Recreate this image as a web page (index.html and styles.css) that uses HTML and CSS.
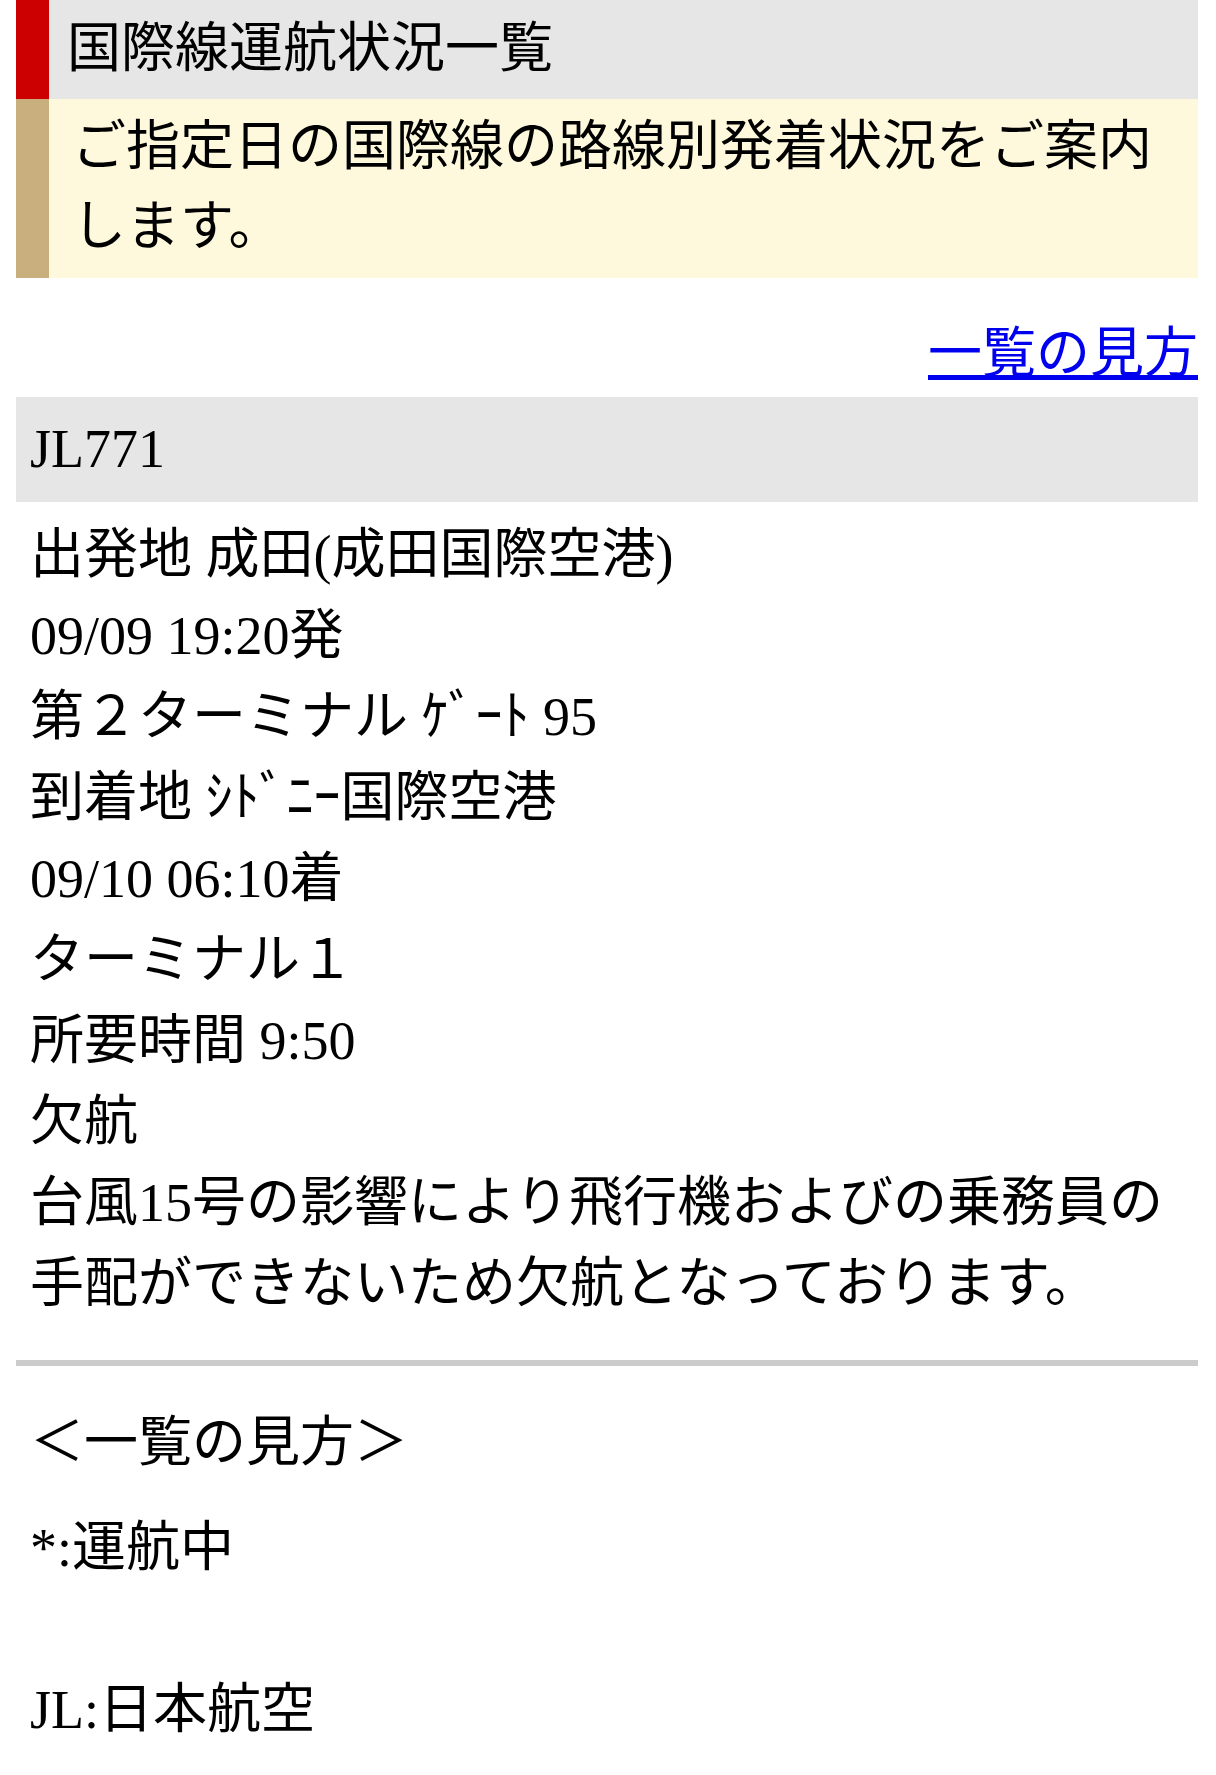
FILE: index.html
```html
<!DOCTYPE html>
<html lang="ja">
<head>
  <meta charset="UTF-8" />
  <meta name="viewport" content="width=device-width, initial-scale=1.0" />
  <title>国際線運航状況一覧</title>
  <link rel="stylesheet" href="styles.css">
</head>
<body>
  <div class="page">
    <h1 class="page-title">国際線運航状況一覧</h1>
    <p class="lead">ご指定日の国際線の路線別発着状況をご案内します。</p>

    <div class="help-link"><a href="#legend">一覧の見方</a></div>

    <div class="flight-no">JL771</div>
    <div class="flight-detail">
      <div>出発地 成田(成田国際空港)</div>
      <div>09/09 19:20発</div>
      <div>第２ターミナル ｹﾞｰﾄ 95</div>
      <div>到着地 ｼﾄﾞﾆｰ国際空港</div>
      <div>09/10 06:10着</div>
      <div>ターミナル１</div>
      <div>所要時間 9:50</div>
      <div>欠航</div>
      <div>台風15号の影響により飛行機およびの乗務員の手配ができないため欠航となっております。</div>
    </div>

    <hr class="divider">

    <div class="legend" id="legend">
      <div class="legend-title">＜一覧の見方＞</div>
      <div>*:運航中<br><br>JL:日本航空</div>
    </div>
  </div>
</body>
</html>
```

FILE: styles.css
```css
body {
  margin: 0;
  font-family: "Liberation Serif", "Noto Sans CJK JP", serif;
  color: #000;
  background: #fff;
}
.page {
  margin: 0 18px 0 16px;
}
.page-title {
  margin: 0;
  height: 99px;
  line-height: 99px;
  padding-left: 18px;
  font-size: 54px;
  font-weight: normal;
  background: #e6e6e6;
  border-left: 33px solid #cc0000;
}
.lead {
  margin: 0;
  padding: 8px 16px 11px 23px;
  font-size: 54px;
  line-height: 80px;
  background: #fef9dc;
  border-left: 33px solid #c9ae7e;
}
.help-link {
  margin-top: 36px;
  text-align: right;
  font-size: 54px;
  line-height: 81px;
}
.help-link a {
  color: #0000ee;
}
.flight-no {
  margin-top: 2px;
  height: 105px;
  line-height: 105px;
  padding-left: 14px;
  font-size: 54px;
  background: #e6e6e6;
}
.flight-detail {
  margin-top: 13px;
  padding-left: 14px;
  font-size: 54px;
  line-height: 81px;
}
.divider {
  margin: 35px 0 0;
  height: 6px;
  border: none;
  background: #cccccc;
}
.legend {
  margin-top: 37px;
  padding-left: 14px;
  font-size: 54px;
  line-height: 81px;
}
.legend-title {
  margin-bottom: 24px;
}
```
